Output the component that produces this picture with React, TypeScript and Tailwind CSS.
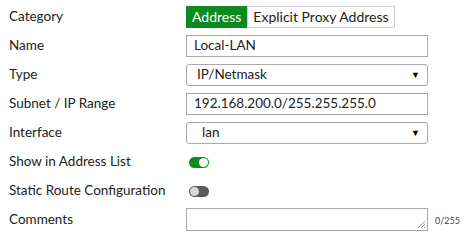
export default function App() {
  const font = { fontFamily: 'Lato, "Open Sans", sans-serif' };
  const rows: { label: string; control: React.ReactNode }[] = [
    {
      label: 'Category',
      control: (
        <div className="flex h-[22px]">
          <div className="flex items-center bg-[#0b8a20] px-[6px] text-[14px] text-white">Address</div>
          <div className="flex items-center border border-[#cfcfcf] px-[5px] text-[14px] text-[#222]">
            Explicit Proxy Address
          </div>
        </div>
      ),
    },
    {
      label: 'Name',
      control: (
        <div className="flex h-[22px] w-[242px] items-center border border-[#a9a9a9] px-[7px] text-[13.5px] text-[#222]">
          Local-LAN
        </div>
      ),
    },
    {
      label: 'Type',
      control: (
        <div className="flex h-[22px] w-[242px] items-center justify-between rounded-[3px] border border-[#a9a9a9] pl-[10px] pr-[7px] text-[13.5px] text-[#222]">
          <span>IP/Netmask</span>
          <span className="text-[9px] text-black">▼</span>
        </div>
      ),
    },
    {
      label: 'Subnet / IP Range',
      control: (
        <div className="flex h-[22px] w-[242px] items-center border border-[#a9a9a9] px-[7px] text-[13.5px] text-[#222]">
          192.168.200.0/255.255.255.0
        </div>
      ),
    },
    {
      label: 'Interface',
      control: (
        <div className="flex h-[22px] w-[242px] items-center justify-between rounded-[3px] border border-[#a9a9a9] pl-[15px] pr-[7px] text-[13.5px] text-[#222]">
          <span>lan</span>
          <span className="text-[9px] text-black">▼</span>
        </div>
      ),
    },
    {
      label: 'Show in Address List',
      control: (
        <div className="ml-[3px] mt-[2px] flex h-[11px] w-[20px] items-center justify-end rounded-full bg-[#0f8a22] px-[1px]">
          <div className="h-[9px] w-[9px] rounded-full bg-white" />
        </div>
      ),
    },
    {
      label: 'Static Route Configuration',
      control: (
        <div className="ml-[3px] mt-[2px] flex h-[11px] w-[20px] items-center justify-start rounded-full bg-[#5a5a5a] px-[1px]">
          <div className="h-[9px] w-[9px] rounded-full bg-[#d8d8d8]" />
        </div>
      ),
    },
    {
      label: 'Comments',
      control: (
        <div className="flex items-center">
          <div className="relative h-[23px] w-[242px] border border-[#a9a9a9]">
            <svg className="absolute bottom-[1px] right-[1px]" width="9" height="9" viewBox="0 0 9 9">
              <path d="M8 1L1 8M8 4L4 8M8 7L7 8" stroke="#999" strokeWidth="1" />
            </svg>
          </div>
          <span className="ml-[7px] mt-[3px] text-[9px] text-[#444]">0/255</span>
        </div>
      ),
    },
  ];
  return (
    <div className="h-[240px] w-[470px] overflow-hidden bg-white pt-[2px]" style={font}>
      {rows.map((r) => (
        <div key={r.label} className="flex h-[29px] items-center">
          <div className="w-[186px] pl-[9px] text-[13.5px] text-[#222]">{r.label}</div>
          {r.control}
        </div>
      ))}
    </div>
  );
}
